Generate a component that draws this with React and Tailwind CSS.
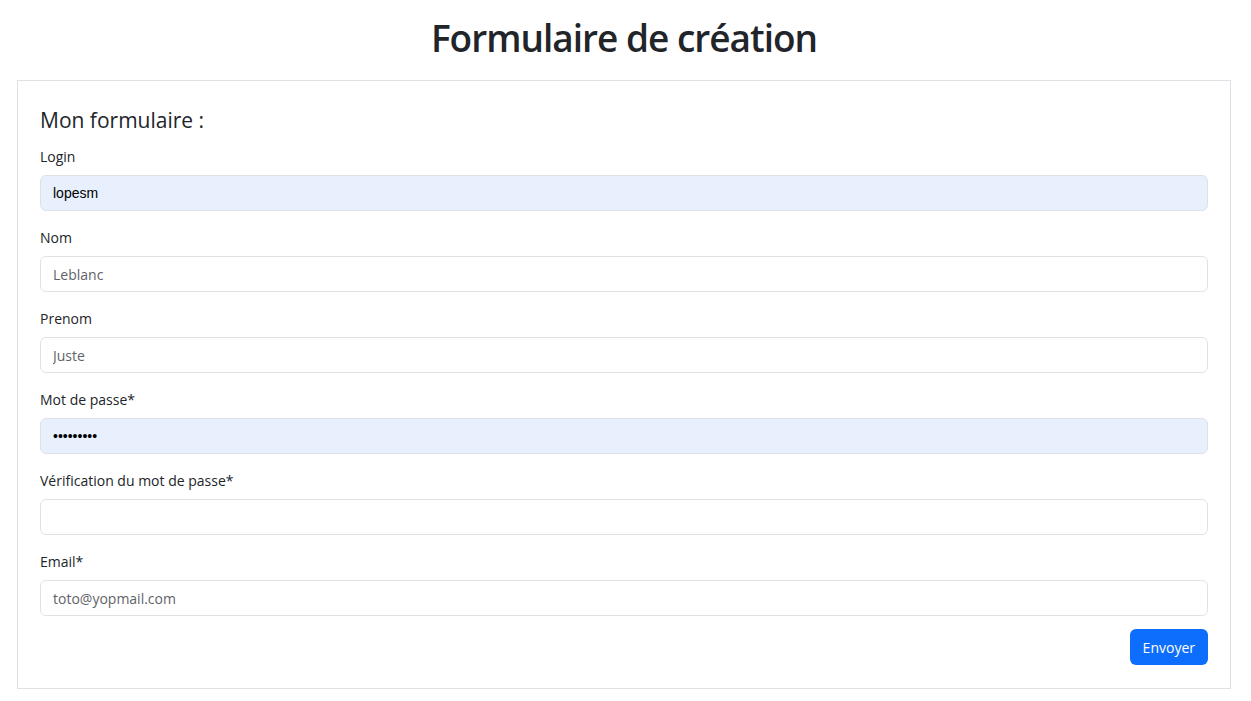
import React from "react";

const fields = [
  { label: "Login", value: "lopesm", autofill: true },
  { label: "Nom", placeholder: "Leblanc" },
  { label: "Prenom", placeholder: "Juste" },
  { label: "Mot de passe*", value: "123456789", type: "password", autofill: true },
  { label: "Vérification du mot de passe*", type: "password" },
  { label: "Email*", placeholder: "toto@yopmail.com", type: "email" },
];

export default function App() {
  return (
    <div className="min-h-screen bg-white text-[#212529] font-['Open_Sans',sans-serif] pl-[17px] pr-[20px]">
      <h1 className="text-center text-[37px] leading-[48px] font-semibold pt-[14px] mb-[18px] tracking-[-1px]">
        Formulaire de création
      </h1>

      <form
        className="border border-[#dee2e6] px-[22px] pt-[25px] pb-[23px]"
        onSubmit={(e) => e.preventDefault()}
      >
        <h4 className="text-[21px] leading-[29px] mb-[11px]">Mon formulaire :</h4>

        {fields.map((f) => (
          <div key={f.label} className="mb-4">
            <label className="block text-[14px] leading-[21px] mb-2">{f.label}</label>
            <input
              type={f.type || "text"}
              defaultValue={f.value}
              placeholder={f.placeholder}
              readOnly
              className={
                "w-full h-9 rounded-md border border-[#dee2e6] px-3 text-[14px] outline-none placeholder:text-[#5f6368] " +
                (f.autofill
                  ? "bg-[#e8f0fe] text-black font-['Liberation_Sans',sans-serif] text-[13.5px]"
                  : "bg-white")
              }
            />
          </div>
        ))}

        <div className="flex justify-end -mt-[3px]">
          <button
            type="submit"
            className="h-9 px-[13px] rounded-md bg-[#0d6efd] text-white text-[14px]"
          >
            Envoyer
          </button>
        </div>
      </form>
    </div>
  );
}
